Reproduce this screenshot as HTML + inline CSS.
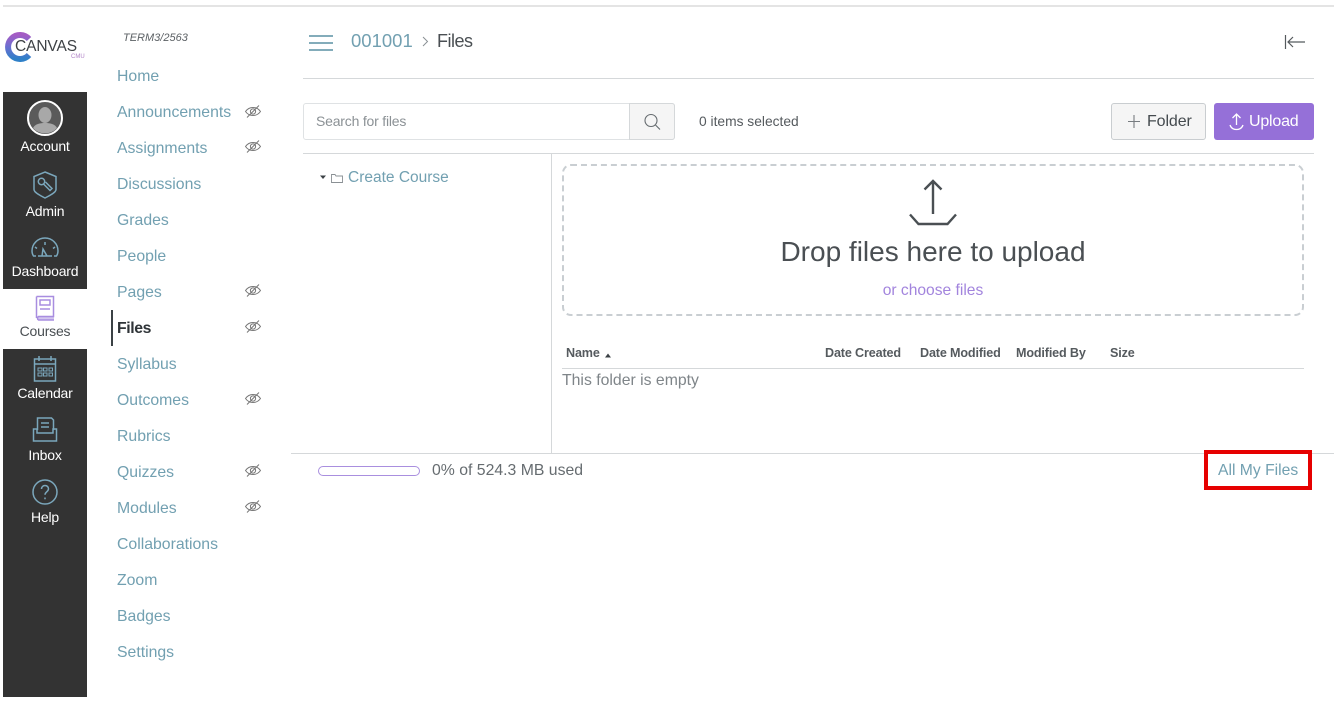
<!DOCTYPE html>
<html lang="en">
<head>
<meta charset="utf-8">
<title>Files</title>
<style>
html,body{margin:0;padding:0;background:#fff}
body{position:relative;width:1334px;height:702px;overflow:hidden;font-family:"Liberation Sans",sans-serif;color:#4a4f53}
.b{position:absolute}
.t{position:absolute;white-space:nowrap;line-height:20px;height:20px}
.n{left:117px;font-size:15.8px;color:#72a0b1}
.s{left:3px;width:84px;text-align:center;font-size:14px;color:#fff;letter-spacing:-.2px}
.h{top:343px;font-size:12.6px;font-weight:bold;color:#555a5e;letter-spacing:-.15px}
svg{position:absolute;left:0;top:0}
</style>
</head>
<body>
<div class="b" style="left:3px;top:5px;width:1331px;height:2px;background:#e4e4e4"></div>

<div class="b" style="left:3px;top:92px;width:84px;height:605px;background:#333"></div>
<div class="b" style="left:3px;top:289px;width:84px;height:60px;background:#fff"></div>
<div class="b" style="left:111px;top:310px;width:2px;height:36px;background:#3b4145"></div>

<div class="b" style="left:303px;top:78px;width:1011px;height:1px;background:#d5d8da"></div>
<div class="b" style="left:303px;top:153px;width:1011px;height:1px;background:#d5d8da"></div>
<div class="b" style="left:551px;top:153px;width:1px;height:300px;background:#d5d8da"></div>
<div class="b" style="left:291px;top:453px;width:1043px;height:1px;background:#d5d8da"></div>
<div class="b" style="left:562px;top:368px;width:742px;height:1px;background:#d5d8da"></div>

<div class="b" style="left:303px;top:103px;width:372px;height:37px;box-sizing:border-box;border:1px solid #dfe2e4;border-radius:3px"></div>
<div class="b" style="left:629px;top:103px;width:46px;height:37px;box-sizing:border-box;border:1px solid #d5d8da;border-radius:0 3px 3px 0;background:#f5f5f5"></div>
<div class="b" style="left:1111px;top:103px;width:95px;height:37px;box-sizing:border-box;border:1px solid #c9cdd0;border-radius:3px;background:#f5f5f5"></div>
<div class="b" style="left:1214px;top:103px;width:100px;height:37px;border-radius:3px;background:#9570d8"></div>
<div class="b" style="left:562px;top:164px;width:742px;height:152px;box-sizing:border-box;border:2px dashed #c9ced2;border-radius:9px"></div>
<div class="b" style="left:318px;top:466px;width:102px;height:10px;box-sizing:border-box;border:1.5px solid #a98fdf;border-radius:5px"></div>
<div class="b" style="left:1204px;top:450px;width:108px;height:40px;box-sizing:border-box;border:4px solid #e60000"></div>

<div class="t" style="left:15px;top:37px;font-size:15.5px;color:#3d4145;letter-spacing:-.1px">CANVAS</div>
<div class="t" style="left:71px;top:47px;font-size:6px;color:#b184c8">CMU</div>

<div class="t s" style="top:136px">Account</div>
<div class="t s" style="top:201px">Admin</div>
<div class="t s" style="top:261px">Dashboard</div>
<div class="t s" style="top:321px;color:#4a4f53">Courses</div>
<div class="t s" style="top:383px">Calendar</div>
<div class="t s" style="top:445px">Inbox</div>
<div class="t s" style="top:507px">Help</div>

<div class="t" style="left:123px;top:28px;font-size:11px;font-style:italic;color:#5c6165;line-height:21px">TERM3/2563</div>
<div class="t n" style="top:67px">Home</div>
<div class="t n" style="top:103px">Announcements</div>
<div class="t n" style="top:139px">Assignments</div>
<div class="t n" style="top:175px">Discussions</div>
<div class="t n" style="top:211px">Grades</div>
<div class="t n" style="top:247px">People</div>
<div class="t n" style="top:283px">Pages</div>
<div class="t n" style="top:319px;color:#2f3438;font-weight:bold;letter-spacing:-.4px">Files</div>
<div class="t n" style="top:355px">Syllabus</div>
<div class="t n" style="top:391px">Outcomes</div>
<div class="t n" style="top:427px">Rubrics</div>
<div class="t n" style="top:463px">Quizzes</div>
<div class="t n" style="top:499px">Modules</div>
<div class="t n" style="top:535px">Collaborations</div>
<div class="t n" style="top:571px">Zoom</div>
<div class="t n" style="top:607px">Badges</div>
<div class="t n" style="top:643px">Settings</div>

<div class="t" style="left:351px;top:31px;font-size:18.5px;color:#72a0b1">001001</div>
<div class="t" style="left:437px;top:31px;font-size:18px;color:#4a4f53;letter-spacing:-.5px">Files</div>

<div class="t" style="left:316px;top:111px;font-size:14px;color:#8b9195;letter-spacing:-.2px">Search for files</div>
<div class="t" style="left:699px;top:112px;font-size:13.8px;color:#555a5e">0 items selected</div>
<div class="t" style="left:1147px;top:112px;font-size:16px;color:#444a4e;letter-spacing:-.1px">Folder</div>
<div class="t" style="left:1249px;top:112px;font-size:16px;color:#fff;letter-spacing:-.2px">Upload</div>

<div class="t" style="left:348px;top:168px;font-size:15.5px;color:#72a0b1">Create Course</div>

<div class="t" style="left:562px;width:742px;top:242px;text-align:center;font-size:28px;color:#4a4f53">Drop files here to upload</div>
<div class="t" style="left:562px;width:742px;top:281px;text-align:center;font-size:15.6px;color:#a284dd">or choose files</div>

<div class="t h" style="left:566px">Name</div>
<div class="t h" style="left:825px">Date Created</div>
<div class="t h" style="left:920px">Date Modified</div>
<div class="t h" style="left:1016px">Modified By</div>
<div class="t h" style="left:1110px">Size</div>

<div class="t" style="left:562px;top:371px;font-size:15.8px;color:#7f8589">This folder is empty</div>
<div class="t" style="left:432px;top:461px;font-size:15.8px;color:#666c70">0% of 524.3 MB used</div>
<div class="t" style="left:1218px;top:461px;font-size:15.7px;color:#72a0b1">All My Files</div>

<svg width="1334" height="702" viewBox="0 0 1334 702" fill="none">
<defs>
<linearGradient id="lg" x1="0" y1="0" x2="0" y2="1">
<stop offset="0" stop-color="#a45cc4"/><stop offset=".5" stop-color="#6a6fd0"/><stop offset="1" stop-color="#2f80c8"/>
</linearGradient>
</defs>
<!-- logo -->
<path d="M29 39A12 12 0 1 0 29 55" stroke="url(#lg)" stroke-width="6"/>

<!-- account -->
<circle cx="45" cy="118" r="17" fill="#5a5a5a" stroke="#fff" stroke-width="2"/>
<ellipse cx="45" cy="115" rx="6.500" ry="8" fill="#a8a8a8"/>
<path d="M33 128c2-4 7-5 12-5s10 1 12 5a16 16 0 0 1-24 0z" fill="#a8a8a8"/>

<g stroke="#7ba7bc" stroke-width="1.500">
<!-- admin -->
<path d="M45 172l11 4.500v13c0 3-6 6-11 8.500-5-2.500-11-5.500-11-8.500v-13z"/>
<circle cx="41.500" cy="181.500" r="3.200"/><path d="M43.500 184l6.500 6.500 2-2-6.500-6.500"/>
<!-- dashboard -->
<path d="M36 256h-2.500c-1-1.500-1.500-3-1.500-5a13 13 0 0 1 26 0c0 2-.5 3.500-1.500 5H54"/>
<path d="M38 256h14M45 242v3M35 247l2 1.500M55 247l-2 1.500M43 249l4 7h-5z"/>
<!-- calendar -->
<path d="M34.500 359h21v22h-21zM34.500 364h21M39 356v5M51 356v5"/>
<path d="M38 368h4v3h-4zM43.500 368h3.500v3h-3.500zM49 368h3.500v3H49zM38 373h4v3h-4zM43.500 373h3.500v3h-3.500zM49 373h3.500v3H49z" stroke-width="1"/>
<!-- inbox -->
<path d="M37.500 430v-12h14l2 2v10M41 423h8M41 427h8"/>
<path d="M37 429h-3.500v12h23v-12H53v4H37z"/>
<!-- help -->
<circle cx="45" cy="492" r="12"/>
<path d="M41.500 489c0-2 1.500-3.500 3.500-3.500s3.500 1.500 3.500 3.300c0 3-3.500 3-3.500 6M45 497.500v1.800"/>
</g>
<!-- courses -->
<g stroke="#a88de0" stroke-width="1.500">
<path d="M36.500 296.500h17v20H38.500a2 2 0 0 0 0 3.500H54M36.500 296.500v21.500"/>
<path d="M40 300h10v5H40zM40 309h10"/>
</g>
<path d="M37 317h17v3H37z" fill="#a88de0" opacity=".5"/>

<!-- eyes -->
<g stroke="#777" stroke-width="1">
<g id="e"><path d="M245.500 111.500c2-2.800 4.500-4 7.500-4s5.500 1.200 7.500 4c-2 2.800-4.500 4-7.500 4s-5.500-1.200-7.500-4z"/><circle cx="253" cy="111.500" r="2.600"/><path d="M247 117.500l12-12"/></g>
<use href="#e" y="35"/>
<use href="#e" y="179"/>
<use href="#e" y="215"/>
<use href="#e" y="287"/>
<use href="#e" y="359"/>
<use href="#e" y="395"/>
</g>

<!-- hamburger -->
<path d="M309 36h24M309 43h24M309 50h24" stroke="#72a0b1" stroke-width="1.800"/>
<path d="M423 37l4.500 4.500-4.500 4.500" stroke="#8a9094" stroke-width="1"/>
<!-- collapse -->
<path d="M1285.500 35v14M1305 42h-17M1293 37l-5 5 5 5" stroke="#555a5e" stroke-width="1.200"/>
<!-- search -->
<circle cx="651" cy="120.500" r="6" stroke="#666c70" stroke-width="1.100"/>
<path d="M655.500 125l4.500 4.500" stroke="#666c70" stroke-width="1.100"/>
<!-- plus -->
<path d="M1134 115v13M1128 121.500h12" stroke="#777c80" stroke-width="1.100"/>
<!-- upload small -->
<path d="M1236.500 114v11M1232.500 118l4-4 4 4M1230 125c1 3 3 4.500 6.500 4.500s5.500-1.500 6.500-4.500" stroke="#fff" stroke-width="1.300"/>
<!-- folder tree -->
<path d="M320 175.500h6l-3 3.500z" fill="#3b4145"/>
<path d="M331.500 182.500v-8h3.500l1 1.500h6.500v6.500z" stroke="#8a9094" stroke-width=".9"/>
<!-- big upload -->
<path d="M933 181v33M924.500 189.500l8.500-8.500 8.500 8.500M910 214.500l8.500 9.500h29l8.500-9.500" stroke="#4a4f53" stroke-width="2.400"/>
<!-- sort -->
<path d="M605 357.500h6l-3-4z" fill="#3b4145"/>
</svg>
</body>
</html>
